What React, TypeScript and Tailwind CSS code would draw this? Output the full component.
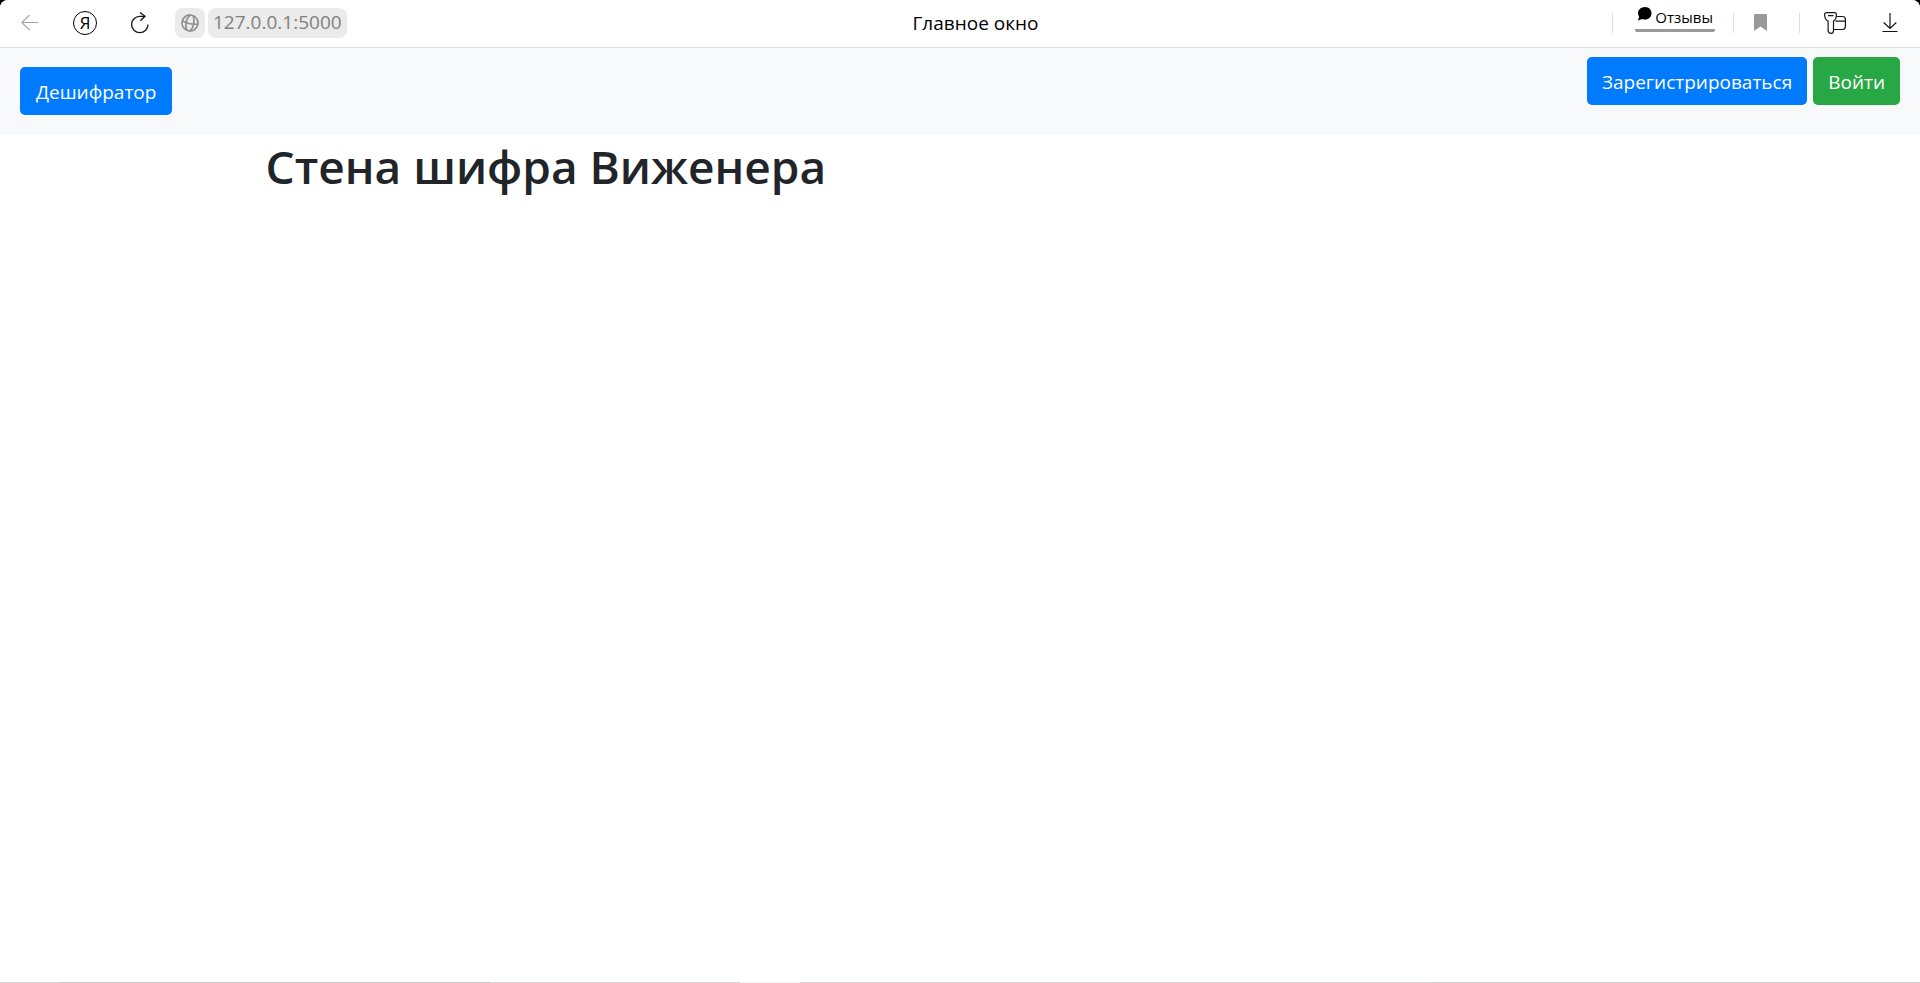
function BackIcon() {
  return (
    <svg width="18" height="16" viewBox="0 0 18 16" fill="none" stroke="#a3a3a3" strokeWidth="1.1" aria-hidden="true">
      <path d="M17.500 7.500H.8M8.500 0 .8 7.500 8.500 15" />
    </svg>
  );
}

function ReloadIcon() {
  return (
    <svg width="18" height="22" viewBox="0 0 18 22" fill="none" stroke="#161616" strokeWidth="1.3" aria-hidden="true">
      <path d="M17 12.500a8.200 8.200 0 1 1-8.200-8.200H14" />
      <path d="M9 .5 14 4.300 9.300 8.700" />
    </svg>
  );
}

function GlobeIcon() {
  return (
    <svg width="18" height="18" viewBox="0 0 18 18" fill="none" stroke="#8c8c8c" strokeWidth="1.600" aria-hidden="true">
      <g transform="rotate(12 9 9)">
        <circle cx="9" cy="9" r="8" />
        <path d="M7.500 1C4.300 5.500 4.300 12.500 7.500 17M10.500 1c3.200 4.500 3.200 11.500 0 16M1 8.500c5 1.500 11 1.500 16 0" />
      </g>
    </svg>
  );
}

function BubbleIcon() {
  return (
    <svg width="16" height="14" viewBox="0 0 16 14" aria-hidden="true">
      <path d="M8 0c3.900 0 6.500 2.800 6.500 6.300s-2.700 6.300-6.500 6.300c-1.100 0-2-.2-2.800-.6L1 13.500l1.100-3.700C1.400 8.800 1 7.600 1 6.300 1 2.800 4.100 0 8 0Z" fill="#000" />
    </svg>
  );
}

function BookmarkIcon() {
  return (
    <svg width="13" height="17" viewBox="0 0 13 17" aria-hidden="true">
      <path d="M1 0h11a1 1 0 0 1 1 1v16l-6.500-4.500L0 17V1a1 1 0 0 1 1-1Z" fill="#999" />
    </svg>
  );
}

function KeyIcon() {
  return (
    <svg width="22" height="22" viewBox="0 0 22 22" fill="none" stroke="#161616" strokeWidth="1.2" aria-hidden="true">
      <path d="M2.500.6h8c1.200 0 2 .8 1.900 2-.1 1.600-.3 2.900-.7 4.100-.3 1-.9 1.700-2.200 2.300v9.500c0 1.800-.9 2.900-2.500 2.900s-2.900-1.100-2.900-2.900V9C2.800 8.400 2 7.700 1.500 6.700 1 5.500.7 4.200.6 2.600.5 1.400 1.300.6 2.500.6Z" />
      <path d="M4 3.600h5.500M12.300 4.500h6.200c1.800 0 2.900 1.100 2.900 2.900v7.200c0 1.800-1.100 2.900-2.900 2.900H9.700M11.500 9.100h9.700" />
    </svg>
  );
}

function DownloadIcon() {
  return (
    <svg width="16" height="20" viewBox="0 0 16 20" fill="none" stroke="#161616" strokeWidth="1.2" aria-hidden="true">
      <path d="M8 0v15.500M1.700 9.500 8 15.500l6.300-6M.5 18.500h15" />
    </svg>
  );
}

function Divider() {
  return <span className="h-5 w-px bg-[#dedede]" />;
}

function BrowserBar() {
  return (
    <header className="flex h-12 items-start border-b border-[#dcdcdc] bg-white px-5 text-black">
      <div className="flex h-[45px] items-center">
        <button type="button" aria-label="Назад" className="w-[53px] pl-px">
          <BackIcon />
        </button>
        <button
          type="button"
          className="flex size-6 items-center justify-center rounded-full border border-black font-['Liberation_Sans_Narrow','Open_Sans',sans-serif] text-[17px] leading-none"
        >
          Я
        </button>
        <button type="button" aria-label="Обновить" className="ml-[34px] w-11">
          <ReloadIcon />
        </button>
        <button
          type="button"
          aria-label="О сайте"
          className="flex size-[30px] items-center justify-center rounded-lg bg-[#ebebeb]"
        >
          <GlobeIcon />
        </button>
        <a href="#address" className="ml-[3px] flex h-[30px] items-center rounded-lg bg-[#ebebeb] px-[5px] text-[19px] text-[#808080]">
          127.0.0.1:5000
        </a>
      </div>
      <div className="flex h-[46px] flex-1 items-center justify-center pr-2 text-[19px]">Главное окно</div>
      <div className="flex h-[45px] items-center">
        <Divider />
        <a
          href="#reviews"
          className="mr-[18px] mb-[7px] ml-[22px] flex h-[25px] items-start rounded-b-xs border-b-[3px] border-[#999] px-0.5 text-[15px] leading-5"
        >
          <BubbleIcon />
          <span className="ml-0.5">Отзывы</span>
        </a>
        <Divider />
        <button type="button" aria-label="Закладка" className="mx-5">
          <BookmarkIcon />
        </button>
        <span className="ml-3 h-5 w-px bg-[#dedede]" />
        <button type="button" aria-label="Пароли" className="ml-6">
          <KeyIcon />
        </button>
        <button type="button" aria-label="Загрузки" className="mr-0.5 ml-9">
          <DownloadIcon />
        </button>
      </div>
    </header>
  );
}

export default function App() {
  return (
    <div className="flex min-h-screen flex-col bg-black font-['Open_Sans',sans-serif] text-[#212529]">
      <div className="flex flex-1 flex-col overflow-hidden rounded-t-lg bg-white">
        <BrowserBar />
        <nav className="flex items-start justify-between bg-[#f8f9fb] px-5 pt-[9px] pb-5 text-[19px] leading-[30px] text-white">
          <a href="#decoder" className="mt-[10px] rounded-[5px] bg-[#007bff] px-4 pt-[10px] pb-2">
            Дешифратор
          </a>
          <div className="flex gap-[6px]">
            <a href="#register" className="rounded-[5px] bg-[#007bff] px-[15px] pt-[10px] pb-2">
              Зарегистрироваться
            </a>
            <a href="#login" className="rounded-[5px] bg-[#28a745] px-[15px] pt-[10px] pb-2">
              Войти
            </a>
          </div>
        </nav>
        <main className="mx-auto w-full max-w-[1425px] flex-1 px-[18px]">
          <h1 className="text-[46px] leading-[62px] font-semibold">Стена шифра Виженера</h1>
        </main>
        <footer className="flex h-px">
          <span className="w-[60px] bg-[#d2d2d2]" />
          <span className="w-[430px] bg-[#c6c9c7]" />
          <span className="w-[250px] bg-[#dcd2d6]" />
          <span className="w-[60px] bg-[#f2f2f2]" />
          <span className="w-[630px] bg-[#dcd2d6]" />
          <span className="flex-1 bg-[#d0d0d0]" />
        </footer>
      </div>
    </div>
  );
}
